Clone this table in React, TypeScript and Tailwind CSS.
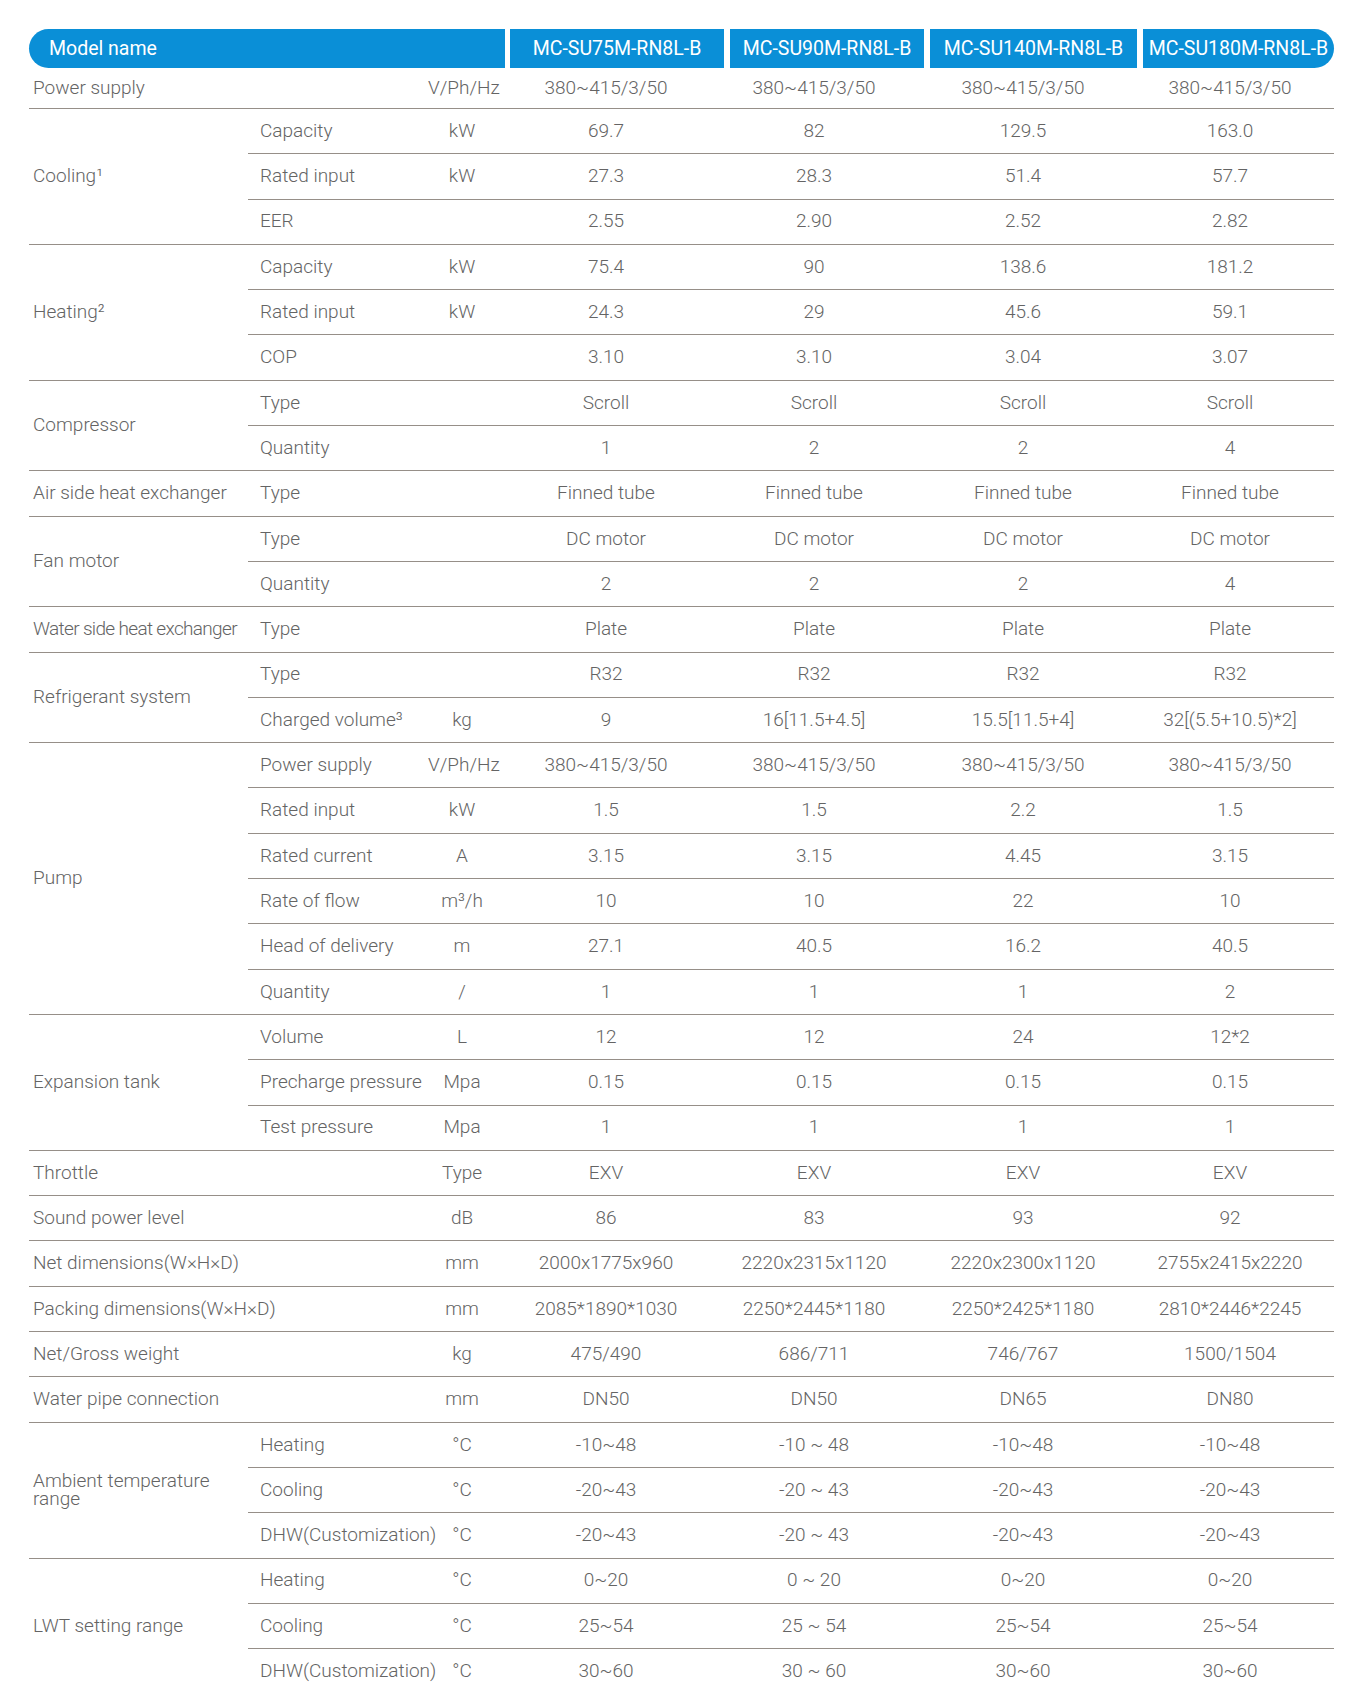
import type { ReactNode } from 'react';

type Row = { sub?: ReactNode; unit?: string; v: string[] };
type Group = { label: ReactNode; rows: Row[] };

const MODELS = ['MC-SU75M-RN8L-B', 'MC-SU90M-RN8L-B', 'MC-SU140M-RN8L-B', 'MC-SU180M-RN8L-B'];

const four = (s: string) => [s, s, s, s];

const GROUPS: Group[] = [
  {
    label: 'Cooling¹',
    rows: [
      { sub: 'Capacity', unit: 'kW', v: ['69.7', '82', '129.5', '163.0'] },
      { sub: 'Rated input', unit: 'kW', v: ['27.3', '28.3', '51.4', '57.7'] },
      { sub: 'EER', v: ['2.55', '2.90', '2.52', '2.82'] },
    ],
  },
  {
    label: 'Heating²',
    rows: [
      { sub: 'Capacity', unit: 'kW', v: ['75.4', '90', '138.6', '181.2'] },
      { sub: 'Rated input', unit: 'kW', v: ['24.3', '29', '45.6', '59.1'] },
      { sub: 'COP', v: ['3.10', '3.10', '3.04', '3.07'] },
    ],
  },
  {
    label: 'Compressor',
    rows: [
      { sub: 'Type', v: four('Scroll') },
      { sub: 'Quantity', v: ['1', '2', '2', '4'] },
    ],
  },
  { label: 'Air side heat exchanger', rows: [{ sub: 'Type', v: four('Finned tube') }] },
  {
    label: 'Fan motor',
    rows: [
      { sub: 'Type', v: four('DC motor') },
      { sub: 'Quantity', v: ['2', '2', '2', '4'] },
    ],
  },
  {
    label: <span className="tracking-[-0.035em]">Water side heat exchanger</span>,
    rows: [{ sub: 'Type', v: four('Plate') }],
  },
  {
    label: 'Refrigerant system',
    rows: [
      { sub: 'Type', v: four('R32') },
      { sub: 'Charged volume³', unit: 'kg', v: ['9', '16[11.5+4.5]', '15.5[11.5+4]', '32[(5.5+10.5)*2]'] },
    ],
  },
  {
    label: 'Pump',
    rows: [
      { sub: 'Power supply', unit: 'V/Ph/Hz', v: four('380~415/3/50') },
      { sub: 'Rated input', unit: 'kW', v: ['1.5', '1.5', '2.2', '1.5'] },
      { sub: 'Rated current', unit: 'A', v: ['3.15', '3.15', '4.45', '3.15'] },
      { sub: 'Rate of flow', unit: 'm³/h', v: ['10', '10', '22', '10'] },
      { sub: 'Head of delivery', unit: 'm', v: ['27.1', '40.5', '16.2', '40.5'] },
      { sub: 'Quantity', unit: '/', v: ['1', '1', '1', '2'] },
    ],
  },
  {
    label: 'Expansion tank',
    rows: [
      { sub: 'Volume', unit: 'L', v: ['12', '12', '24', '12*2'] },
      { sub: 'Precharge pressure', unit: 'Mpa', v: four('0.15') },
      { sub: 'Test pressure', unit: 'Mpa', v: four('1') },
    ],
  },
  { label: 'Throttle', rows: [{ unit: 'Type', v: four('EXV') }] },
  { label: 'Sound power level', rows: [{ unit: 'dB', v: ['86', '83', '93', '92'] }] },
  {
    label: 'Net dimensions(W×H×D)',
    rows: [{ unit: 'mm', v: ['2000x1775x960', '2220x2315x1120', '2220x2300x1120', '2755x2415x2220'] }],
  },
  {
    label: 'Packing dimensions(W×H×D)',
    rows: [{ unit: 'mm', v: ['2085*1890*1030', '2250*2445*1180', '2250*2425*1180', '2810*2446*2245'] }],
  },
  { label: 'Net/Gross weight', rows: [{ unit: 'kg', v: ['475/490', '686/711', '746/767', '1500/1504'] }] },
  { label: 'Water pipe connection', rows: [{ unit: 'mm', v: ['DN50', 'DN50', 'DN65', 'DN80'] }] },
  {
    label: (
      <span className="block leading-[18px]">
        Ambient temperature
        <br />
        range
      </span>
    ),
    rows: [
      { sub: 'Heating', unit: '°C', v: ['-10~48', '-10 ~ 48', '-10~48', '-10~48'] },
      { sub: 'Cooling', unit: '°C', v: ['-20~43', '-20 ~ 43', '-20~43', '-20~43'] },
      { sub: 'DHW(Customization)', unit: '°C', v: ['-20~43', '-20 ~ 43', '-20~43', '-20~43'] },
    ],
  },
  {
    label: 'LWT setting range',
    rows: [
      { sub: 'Heating', unit: '°C', v: ['0~20', '0 ~ 20', '0~20', '0~20'] },
      { sub: 'Cooling', unit: '°C', v: ['25~54', '25 ~ 54', '25~54', '25~54'] },
      { sub: 'DHW(Customization)', unit: '°C', v: ['30~60', '30 ~ 60', '30~60', '30~60'] },
    ],
  },
];

function Cells({ row }: { row: Row }) {
  return (
    <>
      <div className="w-[180px] shrink-0 pl-3 whitespace-nowrap">{row.sub}</div>
      <div className="w-[68px] shrink-0 text-center whitespace-nowrap">{row.unit}</div>
      <div className="w-[220px] shrink-0 text-center whitespace-nowrap">{row.v[0]}</div>
      <div className="w-[196px] shrink-0 text-center whitespace-nowrap">{row.v[1]}</div>
      <div className="w-[222px] shrink-0 text-center whitespace-nowrap">{row.v[2]}</div>
      <div className="flex-1 pr-2 text-center whitespace-nowrap">{row.v[3]}</div>
    </>
  );
}

function SpecGroup({ group }: { group: Group }) {
  return (
    <div className="flex border-b border-[#968f88]">
      <div className="w-[219px] shrink-0 flex items-center pl-[4px] whitespace-nowrap">{group.label}</div>
      <div className="flex-1 flex flex-col">
        {group.rows.map((row, i) => (
          <div
            key={i}
            className="flex items-center h-[45.3px] border-b border-[#968f88] last:border-b-0 last:h-[44.3px]"
          >
            <Cells row={row} />
          </div>
        ))}
      </div>
    </div>
  );
}

export default function App() {
  return (
    <div className="min-h-[1688px] bg-white pt-[29px] pl-[29px] text-[19px] font-light text-[#646464] [font-family:Roboto,'Liberation_Sans',sans-serif]">
      <div className="w-[1305px]">
        {/* header bar */}
        <div className="flex h-[39px] text-white text-[19.5px] font-normal">
          <div className="w-[476px] bg-[#0a8fd7] rounded-l-full flex items-center pl-5">Model name</div>
          <div className="ml-[5px] w-[214px] bg-[#0a8fd7] flex items-center justify-center">{MODELS[0]}</div>
          <div className="ml-[6px] w-[194px] bg-[#0a8fd7] flex items-center justify-center">{MODELS[1]}</div>
          <div className="ml-[6px] w-[207px] bg-[#0a8fd7] flex items-center justify-center">{MODELS[2]}</div>
          <div className="ml-[6px] flex-1 bg-[#0a8fd7] rounded-r-full flex items-center justify-center">{MODELS[3]}</div>
        </div>

        <div className="flex items-center h-[41px] border-b border-[#968f88]">
          <div className="w-[219px] shrink-0 pl-[4px]">Power supply</div>
          <Cells row={{ unit: 'V/Ph/Hz', v: four('380~415/3/50') }} />
        </div>

        {GROUPS.map((g, i) => (
          <SpecGroup key={i} group={g} />
        ))}
      </div>
    </div>
  );
}
